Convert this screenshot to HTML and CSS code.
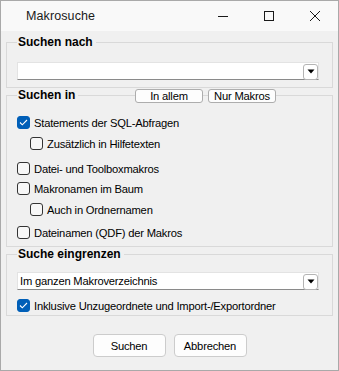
FILE: index.html
```html
<!DOCTYPE html>
<html>
<head>
<meta charset="utf-8">
<link rel="stylesheet" href="styles.css">
</head>
<body>
<div class="window">
  <div class="titlebar">
    <span class="title">Makrosuche</span>
    <div class="controls">
      <span class="ctl"><svg width="10" height="10" viewBox="0 0 10 10"><path d="M0 5.5H10" stroke="#1a1a1a" stroke-width="1"/></svg></span>
      <span class="ctl"><svg width="10" height="10" viewBox="0 0 10 10"><rect x="0.5" y="0.5" width="9" height="9" fill="none" stroke="#1a1a1a" stroke-width="1"/></svg></span>
      <span class="ctl"><svg width="10" height="10" viewBox="0 0 10 10"><path d="M0 0L10 10M10 0L0 10" stroke="#1a1a1a" stroke-width="1"/></svg></span>
    </div>
  </div>
  <div class="content">
    <div class="group g1">
      <div class="group-head"><span class="legend">Suchen nach</span></div>
      <div class="combo c1">
        <span class="combo-text"></span>
        <span class="drop"><svg width="8" height="5" viewBox="0 0 8 5"><path d="M0.5 0.5H7.5L4 4.5Z" fill="#000"/></svg></span>
      </div>
    </div>
    <div class="group g2">
      <div class="group-head">
        <span class="legend">Suchen in</span>
        <span class="mini-btn first">In allem</span>
        <span class="mini-btn last">Nur Makros</span>
      </div>
      <label class="row r1"><span class="box checked"><svg width="9" height="7" viewBox="0 0 9 7"><path d="M1 3.5L3.3 5.8L8 1" fill="none" stroke="#fff" stroke-width="1.1"/></svg></span>Statements der SQL-Abfragen</label>
      <label class="row sub r2"><span class="box"></span>Zusätzlich in Hilfetexten</label>
      <label class="row r3"><span class="box"></span>Datei- und Toolboxmakros</label>
      <label class="row r4"><span class="box"></span>Makronamen im Baum</label>
      <label class="row sub r5"><span class="box"></span>Auch in Ordnernamen</label>
      <label class="row r6"><span class="box"></span>Dateinamen (QDF) der Makros</label>
    </div>
    <div class="group g3">
      <div class="group-head"><span class="legend">Suche eingrenzen</span></div>
      <div class="combo c3">
        <span class="combo-text">Im ganzen Makroverzeichnis</span>
        <span class="drop"><svg width="8" height="5" viewBox="0 0 8 5"><path d="M0.5 0.5H7.5L4 4.5Z" fill="#000"/></svg></span>
      </div>
      <label class="row r7"><span class="box checked"><svg width="9" height="7" viewBox="0 0 9 7"><path d="M1 3.5L3.3 5.8L8 1" fill="none" stroke="#fff" stroke-width="1.1"/></svg></span>Inklusive Unzugeordnete und Import-/Exportordner</label>
    </div>
    <div class="buttons">
      <span class="btn">Suchen</span>
      <span class="btn">Abbrechen</span>
    </div>
  </div>
</div>
</body>
</html>
```
FILE: styles.css
```css
* { box-sizing: border-box; }
html, body { margin: 0; padding: 0; }
body {
  font-family: "Liberation Sans", Arial, sans-serif;
  font-size: 11.2px;
  letter-spacing: -0.2px;
  color: #000;
  background: #f0f0f0;
}
.window {
  width: 339px;
  height: 371px;
  border: 1px solid #a9a9a9;
  background: #f0f0f0;
  display: flex;
  flex-direction: column;
}
.titlebar {
  height: 30px;
  background: #f9f9f9;
  display: flex;
  align-items: center;
  flex: none;
}
.title {
  margin-left: 25px;
  color: #1a1a1a;
  font-size: 12.5px;
  letter-spacing: 0.1px;
}
.controls {
  margin-left: auto;
  display: flex;
  height: 100%;
}
.ctl {
  width: 46px;
  display: flex;
  align-items: center;
  justify-content: center;
}
.content {
  padding: 11px 5px 0 5px;
  display: flex;
  flex-direction: column;
}
.group {
  border: 1px solid #d9d9d9;
  padding: 0 13px 0 10px;
  display: flex;
  flex-direction: column;
}
.group-head {
  display: flex;
  align-items: center;
  height: 15px;
  margin-top: -8px;
}
.legend {
  font-weight: bold;
  font-size: 12px;
  letter-spacing: 0;
  background: #f0f0f0;
  padding: 0 3px 0 1px;
  line-height: 15px;
}
.mini-btn {
  height: 14px;
  border: 1px solid #adadad;
  border-radius: 3px;
  background: #fdfdfd;
  line-height: 12px;
  width: 68px;
  white-space: nowrap;
  text-align: center;
  margin-left: 5px;
}
.mini-btn.first { margin-left: auto; }
.mini-btn.last { margin-right: 43px; }
.g1 { padding-bottom: 7px; }
.g2 { margin-top: 7px; padding-bottom: 5px; }
.g3 { margin-top: 7px; padding-bottom: 1px; }
.combo {
  height: 18px;
  background: #fff;
  border: 1px solid #e3e3e3;
  border-bottom: 1px solid #8a8a8a;
  display: flex;
  align-items: center;
  padding-left: 2px;
}
.c1 { margin-top: 12px; }
.c3 { margin-top: 10px; }
.combo-text { flex: 1; }
.drop {
  width: 15px;
  height: 16px;
  border: 1px solid #b4b4b4;
  border-radius: 3px;
  background: #fff;
  display: flex;
  align-items: center;
  justify-content: center;
  margin-top: 1px;
}
.row {
  display: flex;
  align-items: center;
  height: 17px;
}
.row.sub { padding-left: 13px; }
.box {
  width: 13px;
  height: 13px;
  border: 1px solid #333;
  border-radius: 3px;
  background: #f7f7f7;
  margin-right: 4px;
  flex: none;
  display: flex;
  align-items: center;
  justify-content: center;
}
.box.checked {
  background: #005fb8;
  border-color: #005fb8;
}
.r1 { margin-top: 11px; }
.r2 { margin-top: 4px; }
.r3 { margin-top: 8px; }
.r4 { margin-top: 3px; }
.r5 { margin-top: 4px; }
.r6 { margin-top: 6px; }
.r7 { margin-top: 7px; }
.buttons {
  display: flex;
  justify-content: center;
  gap: 8px;
  margin-top: 18px;
}
.btn {
  width: 73px;
  height: 23px;
  border: 1px solid #cccccc;
  border-radius: 4px;
  background: #fdfdfd;
  display: flex;
  align-items: center;
  justify-content: center;
}
```
